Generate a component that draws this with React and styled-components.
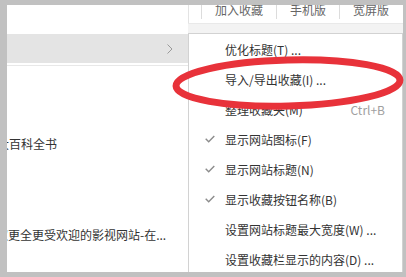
import React from "react";
import styled, { createGlobalStyle } from "styled-components";

const GlobalStyle = createGlobalStyle`
  html, body {
    margin: 0;
    padding: 0;
    background: #c1c1c1;
  }
  body {
    font-family: "Noto Sans CJK SC", "Noto Sans", sans-serif;
  }
`;

const menuItems = [
  { label: "优化标题(T) ..." },
  { label: "导入/导出收藏(I) ..." },
  { label: "整理收藏夹(M)", shortcut: "Ctrl+B" },
  { label: "显示网站图标(F)", checked: true },
  { label: "显示网站标题(N)", checked: true },
  { label: "显示收藏按钮名称(B)", checked: true },
  { label: "设置网站标题最大宽度(W) ..." },
  { label: "设置收藏栏显示的内容(D) ..." },
];

const App = () => {
  return (
    <>
      <GlobalStyle />
      <Frame>
        <Window>
          <LeftPanel>
            <TopSpace />
            <FolderRow>
              <svg width="6" height="10" viewBox="0 0 6 10">
                <polyline
                  points="0.5,0.5 5,5 0.5,9.5"
                  fill="none"
                  stroke="#9a9a9a"
                  strokeWidth="1"
                />
              </svg>
            </FolderRow>
            <Divider />
            <Entry $first>
              <EntryText $shift={10}>大百科全书</EntryText>
            </Entry>
            <Entry>
              <EntryText $shift={11}>取更全更受欢迎的影视网站-在...</EntryText>
            </Entry>
          </LeftPanel>

          <RightPanel>
            <TopBar>
              <BarLink>加入收藏</BarLink>
              <BarLink>手机版</BarLink>
              <BarLink>宽屏版</BarLink>
            </TopBar>
            <Band />
            <Menu>
              {menuItems.map((item) => (
                <MenuItem key={item.label}>
                  <CheckSlot>
                    {item.checked && (
                      <svg width="10" height="8" viewBox="0 0 10 8">
                        <polyline
                          points="0.7,3.8 3.7,6.8 9.3,1"
                          fill="none"
                          stroke="#8c8c8c"
                          strokeWidth="1.4"
                        />
                      </svg>
                    )}
                  </CheckSlot>
                  <Label>{item.label}</Label>
                  {item.shortcut && <Shortcut>{item.shortcut}</Shortcut>}
                </MenuItem>
              ))}
            </Menu>
          </RightPanel>
        </Window>

        <Mark width="406" height="277" viewBox="0 0 406 277">
          <ellipse
            cx="288"
            cy="83"
            rx="112"
            ry="23"
            transform="rotate(-1.5 288 83)"
            fill="none"
            stroke="#e8323a"
            strokeWidth="7"
          />
        </Mark>
      </Frame>
    </>
  );
};

export default App;

const Frame = styled.div`
  position: relative;
  width: 406px;
  height: 277px;
  box-sizing: border-box;
  padding: 5px 3px 5px 7px;
  background: #c1c1c1;
  overflow: hidden;
`;

const Window = styled.div`
  height: 100%;
  background: #fff;
  display: grid;
  grid-template-columns: 181px 1fr;
  overflow: hidden;
`;

const LeftPanel = styled.div`
  display: flex;
  flex-direction: column;
  overflow: hidden;

  & > * {
    flex-shrink: 0;
  }
`;

const TopSpace = styled.div`
  height: 29px;
`;

const FolderRow = styled.div`
  height: 29px;
  background: #e4e4e4;
  display: flex;
  align-items: center;
  justify-content: flex-end;
  padding-right: 15px;
`;

const Divider = styled.div`
  height: 1px;
  margin-top: 2px;
  background: #e8e8e8;
`;

const Entry = styled.div`
  height: 91px;
  margin-top: ${(p) => (p.$first ? "71px" : "0")};
  overflow: hidden;
`;

const EntryText = styled.div`
  margin-left: -${(p) => p.$shift}px;
  font-size: 12px;
  line-height: 14px;
  color: #333;
  white-space: nowrap;
`;

const RightPanel = styled.div`
  display: flex;
  flex-direction: column;
  min-width: 0;
`;

const TopBar = styled.div`
  height: 18px;
  display: flex;
  align-items: flex-start;
  padding-left: 12px;
  border-left: 1px solid #e3e3e3;
  box-sizing: border-box;
`;

const BarLink = styled.div`
  margin-top: -4px;
  padding: 0 13px;
  border-left: 1px solid #dcdcdc;
  font-size: 12px;
  line-height: 18px;
  color: #666;
  white-space: nowrap;
`;

const Band = styled.div`
  height: 10px;
  background: #f3f3f3;
  border-top: 1px solid #e9e9e9;
  box-sizing: border-box;
`;

const Menu = styled.div`
  flex: 1;
  border: 1px solid #d2d2d2;
  border-bottom: none;
  background: #fff;
`;

const MenuItem = styled.div`
  height: 30px;
  display: flex;
  align-items: center;
  padding-right: 17px;
  font-size: 12px;
  color: #333;
`;

const CheckSlot = styled.div`
  width: 36px;
  flex: none;
  display: flex;
  align-items: center;
  padding-left: 16px;
  box-sizing: border-box;
`;

const Label = styled.span`
  flex: 1;
  white-space: nowrap;
`;

const Shortcut = styled.span`
  color: #a0a0a0;
`;

const Mark = styled.svg`
  position: absolute;
  top: 0;
  left: 0;
  pointer-events: none;
`;
